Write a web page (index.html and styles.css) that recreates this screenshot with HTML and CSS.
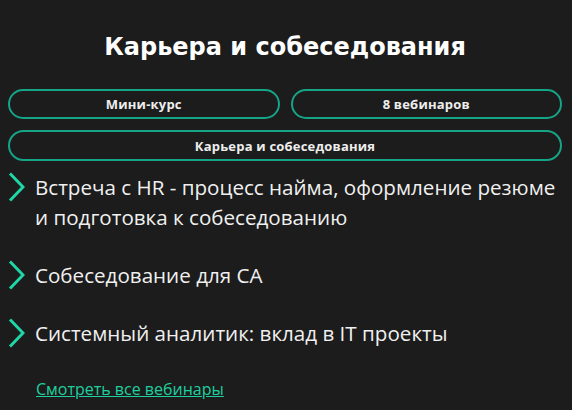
FILE: index.html
```html
<!DOCTYPE html>
<html lang="ru">
<head>
<meta charset="utf-8">
<link rel="stylesheet" href="styles.css">
</head>
<body>
<section class="card">
  <h2 class="title">Карьера и собеседования</h2>
  <div class="tags">
    <span class="tag">Мини-курс</span>
    <span class="tag">8 вебинаров</span>
    <span class="tag tag-wide">Карьера и собеседования</span>
  </div>
  <ul class="list">
    <li class="item">
      <svg class="chev" viewBox="0 0 17 30" width="17" height="30"><path d="M2 1.5 L15 15 L2 28.5" fill="none" stroke="#1fd6a5" stroke-width="3"/></svg>
      <span class="item-text">Встреча с HR - процесс найма, оформление резюме и подготовка к собеседованию</span>
    </li>
    <li class="item">
      <svg class="chev" viewBox="0 0 17 30" width="17" height="30"><path d="M2 1.5 L15 15 L2 28.5" fill="none" stroke="#1fd6a5" stroke-width="3"/></svg>
      <span class="item-text">Собеседование для СА</span>
    </li>
    <li class="item">
      <svg class="chev" viewBox="0 0 17 30" width="17" height="30"><path d="M2 1.5 L15 15 L2 28.5" fill="none" stroke="#1fd6a5" stroke-width="3"/></svg>
      <span class="item-text">Системный аналитик: вклад в IT проекты</span>
    </li>
  </ul>
  <a class="more" href="#">Смотреть все вебинары</a>
</section>
</body>
</html>
```
FILE: styles.css
```css
html, body {
  margin: 0;
  padding: 0;
  background: #1c1c1c;
}
body {
  padding: 0 10px 0 8px;
  font-family: "Open Sans", "DejaVu Sans", sans-serif;
  color: #f2f2f2;
}
.card {
  display: flex;
  flex-direction: column;
}
.title {
  margin: 31px 0 0;
  text-align: center;
  font-family: "DejaVu Sans", sans-serif;
  font-weight: 700;
  font-size: 24px;
  line-height: 32px;
  color: #ffffff;
}
.tags {
  margin-top: 26px;
  display: grid;
  grid-template-columns: 1fr 1fr;
  gap: 11px 11px;
}
.tag {
  height: 30px;
  box-sizing: border-box;
  border: 2px solid #16a487;
  border-radius: 16px;
  display: flex;
  align-items: center;
  justify-content: center;
  font-size: 13px;
  font-weight: 700;
  letter-spacing: 0.2px;
  color: #eeeeee;
}
.tag-wide {
  grid-column: 1 / 3;
  height: 31px;
}
.list {
  list-style: none;
  margin: 11px 0 0;
  padding: 0;
  display: flex;
  flex-direction: column;
  gap: 28px;
}
.item {
  display: flex;
  align-items: flex-start;
  gap: 10px;
}
.chev {
  flex: none;
  margin-top: 0;
}
.item-text {
  font-size: 20.6px;
  line-height: 30px;
  color: #f0f0f0;
}
.more {
  margin: 30px 0 0 28px;
  align-self: flex-start;
  font-size: 16px;
  color: #1fcf9f;
  text-decoration: underline;
}
```
